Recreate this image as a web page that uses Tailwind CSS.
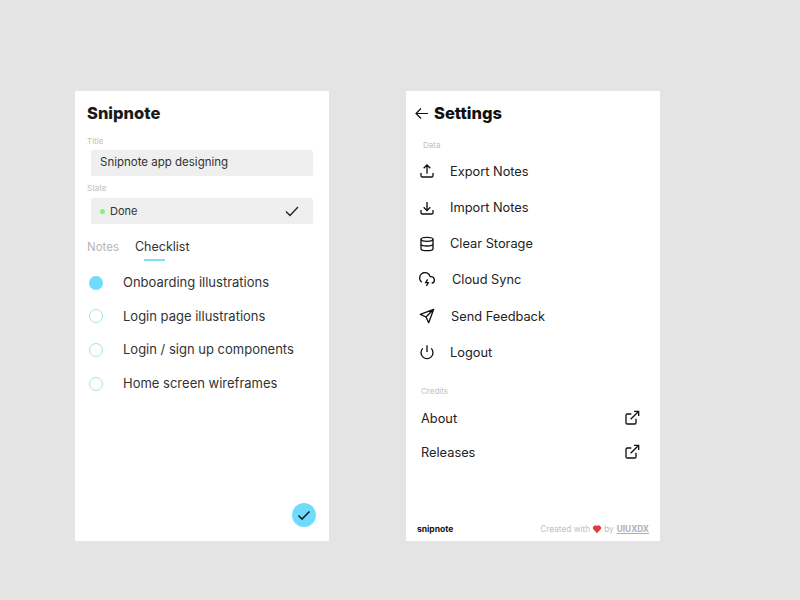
<!doctype html>
<html><head><meta charset="utf-8"><script src="https://cdn.jsdelivr.net/npm/@tailwindcss/browser@4"></script></head>
<body class="m-0 h-[600px] w-[800px] overflow-hidden bg-[#e4e4e4] font-['Inter',sans-serif]">
<div class="flex gap-[77.5px] pl-[75px] pt-[91px]">
<section class="relative flex h-[450px] w-[253.500px] flex-col bg-white">
  <h1 class="ml-[12px] mt-[10px] h-[24px] text-[16.500px] leading-[24px] font-extrabold text-[#1a1a1a]">Snipnote</h1>
  <div class="ml-[12px] mt-[10px] h-[12px] text-[8px] leading-[12px] text-[#c0c0c0]">Title</div>
  <div class="ml-[16px] mt-[3px] flex h-[25.500px] w-[222px] items-center rounded-[2px] bg-[#efefef] pl-[9px] text-[11.500px] text-[#333]">Snipnote app designing</div>
  <div class="ml-[12px] mt-[6.500px] h-[12px] text-[8px] leading-[12px] text-[#c0c0c0]">State</div>
  <div class="ml-[16px] mt-[4px] flex h-[26px] w-[222px] items-center rounded-[2px] bg-[#efefef] pl-[9px] pr-[14px] text-[11px] text-[#333]">
    <span class="mr-[5px] h-[5px] w-[5px] rounded-full bg-[#86ef7d]"></span>Done
    <svg class="ml-auto h-[14px] w-[14px]" viewBox="0 0 14 14" fill="none" stroke="#222" stroke-width="1.3"><path d="M1 7.500l4 4L13 3"/></svg>
  </div>
  <div class="ml-[12px] mt-[14px] flex gap-[16px] text-[12.500px] leading-[18px]">
    <span class="text-[11.500px] text-[#b5b5b5]">Notes</span>
    <span class="flex flex-col text-[#333]">Checklist<span class="ml-[9px] mt-[3px] h-[2px] w-[21px] bg-[#7de0f5]"></span></span>
  </div>
  <ul class="ml-[14px] mt-[4.500px] text-[13px] text-[#333]">
    <li class="flex h-[34px] items-center gap-[20px]"><span class="h-[14px] w-[14px] rounded-full bg-[#6fdcfd]"></span>Onboarding illustrations</li>
    <li class="flex h-[33.500px] items-center gap-[20px]"><span class="h-[14px] w-[14px] rounded-full border border-[#a5e3ea]"></span>Login page illustrations</li>
    <li class="flex h-[33.500px] items-center gap-[20px]"><span class="h-[14px] w-[14px] rounded-full border border-[#a5e3ea]"></span>Login / sign up components</li>
    <li class="flex h-[34px] items-center gap-[20px]"><span class="h-[14px] w-[14px] rounded-full border border-[#a5e3ea]"></span>Home screen wireframes</li>
  </ul>
  <div class="absolute bottom-[14px] right-[13px] flex h-[24px] w-[24px] items-center justify-center rounded-full bg-[#6fdcfd]">
    <svg class="h-[14px] w-[14px]" viewBox="0 0 14 14" fill="none" stroke="#1a1a2a" stroke-width="1.6"><path d="M1.500 7.500l3.500 3.500L12.500 3.500"/></svg>
  </div>
</section>
<section class="flex h-[450px] w-[253.500px] flex-col bg-white text-[12.800px] text-[#222]">
  <div class="ml-[9px] mt-[10px] flex h-[24px] items-center gap-[6px]">
    <svg class="h-[13px] w-[13px]" viewBox="0 0 13 13" fill="none" stroke="#111" stroke-width="1.2"><path d="M13 6.500H1M6 1.500l-5 5 5 5"/></svg>
    <h1 class="text-[16.500px] leading-[24px] font-extrabold text-[#111]">Settings</h1>
  </div>
  <div class="ml-[17px] mt-[14px] h-[12px] text-[8px] leading-[12px] text-[#c0c0c0]">Data</div>
  <ul class="mt-[2.400px]">
    <li class="flex h-[36.200px] items-center pl-[13px]"><svg class="mr-[15px] h-[16px] w-[16px]" viewBox="0 0 24 24" fill="none" stroke="#111" stroke-width="2"><path d="M3 15v4a2 2 0 002 2h14a2 2 0 002-2v-4M12 16V3M7 8l5-5 5 5"/></svg>Export Notes</li>
    <li class="flex h-[36.200px] items-center pl-[13px]"><svg class="mr-[15px] h-[16px] w-[16px]" viewBox="0 0 24 24" fill="none" stroke="#111" stroke-width="2"><path d="M3 15v4a2 2 0 002 2h14a2 2 0 002-2v-4M12 3v13M7 11l5 5 5-5"/></svg>Import Notes</li>
    <li class="flex h-[36.200px] items-center pl-[13px]"><svg class="mr-[15px] h-[16px] w-[16px]" viewBox="0 0 24 24" fill="none" stroke="#111" stroke-width="2"><ellipse cx="12" cy="5" rx="9" ry="3"/><path d="M3 5v14c0 1.700 4 3 9 3s9-1.300 9-3V5M3 12c0 1.700 4 3 9 3s9-1.300 9-3"/></svg>Clear Storage</li>
    <li class="flex h-[36.200px] items-center pl-[13px]"><svg class="mr-[17px] h-[16px] w-[16px]" viewBox="0 0 24 24" fill="none" stroke="#111" stroke-width="2"><path d="M19 16.900A5 5 0 0018 7h-1.300A8 8 0 104 15.200M13 11l-3 5h4l-3 5"/></svg>Cloud Sync</li>
    <li class="flex h-[36.200px] items-center pl-[13px]"><svg class="mr-[16px] h-[16px] w-[16px]" viewBox="0 0 24 24" fill="none" stroke="#111" stroke-width="2" stroke-linejoin="round"><path d="M22 2L2 9.500l8.500 4L14.500 22zM22 2L10.500 13.500"/></svg>Send Feedback</li>
    <li class="flex h-[36.200px] items-center pl-[13px]"><svg class="mr-[15px] h-[16px] w-[16px]" viewBox="0 0 24 24" fill="none" stroke="#111" stroke-width="2"><path d="M12 2v10M18.400 6.600a9 9 0 11-12.800 0"/></svg>Logout</li>
  </ul>
  <div class="ml-[15px] mt-[14.600px] h-[12px] text-[8px] leading-[12px] text-[#c0c0c0]">Credits</div>
  <div class="mt-[4px] flex h-[34px] items-center justify-between pl-[15px] pr-[20px]">About<svg class="h-[16px] w-[16px]" viewBox="0 0 24 24" fill="none" stroke="#111" stroke-width="2"><path d="M18 13v6a2 2 0 01-2 2H5a2 2 0 01-2-2V8a2 2 0 012-2h6M15 2h7v7M10 14L22 2"/></svg></div>
  <div class="flex h-[34px] items-center justify-between pl-[15px] pr-[20px]">Releases<svg class="h-[16px] w-[16px]" viewBox="0 0 24 24" fill="none" stroke="#111" stroke-width="2"><path d="M18 13v6a2 2 0 01-2 2H5a2 2 0 01-2-2V8a2 2 0 012-2h6M15 2h7v7M10 14L22 2"/></svg></div>
  <div class="mt-auto mb-[6px] flex h-[12px] items-center justify-between pl-[11px] pr-[10.500px] text-[8.300px]">
    <span class="text-[8.500px] font-bold text-[#111]">snipnote</span>
    <span class="flex items-center text-[#c0c0c0]">Created with<svg class="mx-[2px] h-[10px] w-[10px]" viewBox="0 0 24 24" fill="#e23b3b"><path d="M12 22L2.500 12A6 6 0 0112 5a6 6 0 019.500 7z"/></svg>by<span class="ml-[3px] font-bold text-[#b0b0b0] underline">UIUXDX</span></span>
  </div>
</section>
</div>
</body></html>
